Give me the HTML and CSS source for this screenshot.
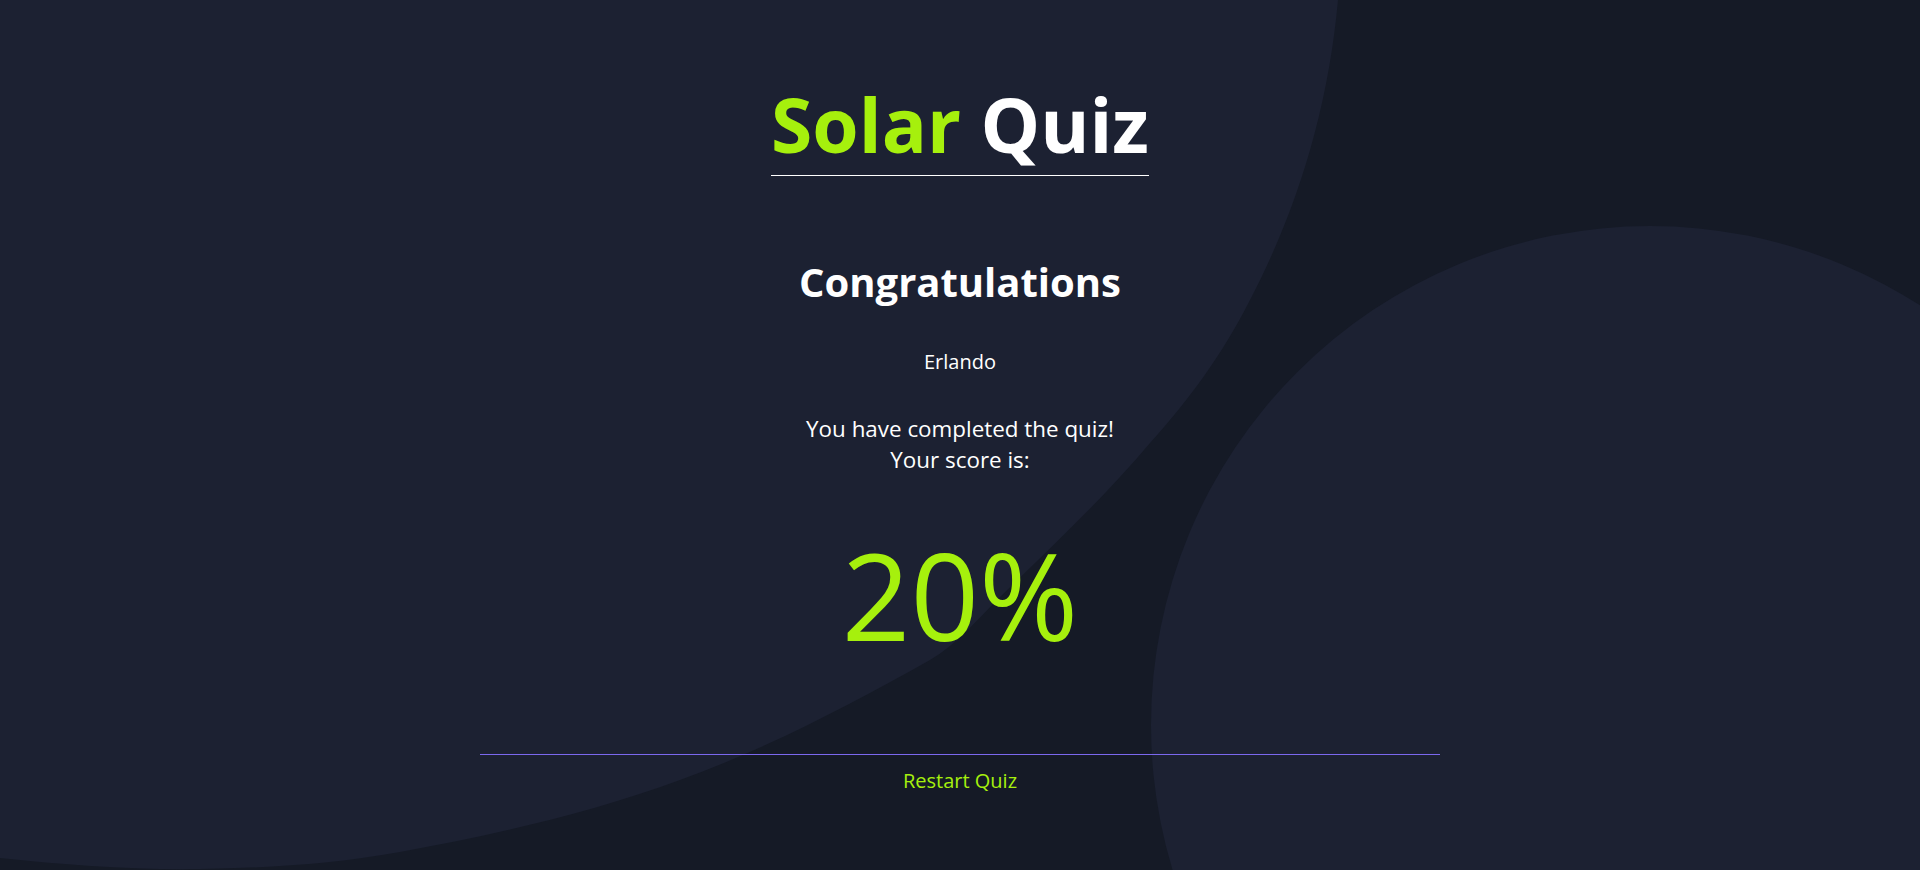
FILE: index.html
```html
<!DOCTYPE html>
<html lang="en">
<head>
<meta charset="utf-8">
<title>Solar Quiz</title>
<link rel="stylesheet" href="styles.css">
</head>
<body>
<svg class="backdrop" viewBox="0 0 1920 870" width="1920" height="870" aria-hidden="true">
  <path class="blob" d="M0,0 H1338 C1328,110 1297,210 1250,300 C1222,355 1189,400 1150,443 C1103,499 1049,549 997,600 C976,621 956,645 930,660 C850,705 766,749 680,780 C590,813 494,835 400,852 C334,864 267,868 200,869 C133,870 66,865 0,858 Z"/>
  <circle class="blob" cx="1650" cy="725" r="499"/>
</svg>
<main class="quiz">
  <h1 class="title"><span class="title-accent">Solar</span> Quiz</h1>
  <section class="result">
    <h2 class="result-heading">Congratulations</h2>
    <p class="player">Erlando</p>
    <p class="message">You have completed the quiz!<br>Your score is:</p>
    <p class="score">20%</p>
  </section>
  <footer class="actions">
    <a class="restart" href="#">Restart Quiz</a>
  </footer>
</main>
</body>
</html>
```
FILE: styles.css
```css
html, body {
  margin: 0;
  padding: 0;
  height: 870px;
  overflow: hidden;
}

body {
  background: #151a26;
  font-family: "Open Sans", "Noto Sans", sans-serif;
  color: #ffffff;
  position: relative;
}

.backdrop {
  position: absolute;
  left: 0;
  top: 0;
  z-index: 0;
  display: block;
}

.blob {
  fill: #1c2132;
}

.quiz {
  position: relative;
  z-index: 1;
  display: flex;
  flex-direction: column;
  align-items: center;
  padding-top: 73px;
}

.title {
  display: inline-block;
  margin: 0;
  font-size: 75px;
  font-weight: 700;
  line-height: normal;
  border-bottom: 1px solid #ffffff;
  color: #ffffff;
}

.title-accent {
  color: #a6f00d;
}

.result {
  display: flex;
  flex-direction: column;
  align-items: center;
  text-align: center;
}

.result-heading {
  margin: 78px 0 0;
  font-size: 40px;
  font-weight: 700;
  line-height: normal;
}

.player {
  margin: 39px 0 0;
  font-size: 20px;
  line-height: normal;
}

.message {
  margin: 38px 0 0;
  font-size: 22.4px;
  line-height: normal;
}

.score {
  margin: 38px 0 0;
  font-size: 120px;
  line-height: normal;
  color: #a6f00d;
}

.actions {
  margin-top: 78px;
  width: 960px;
  border-top: 1px solid #7b68ee;
  padding-top: 12px;
  text-align: center;
}

.restart {
  font-size: 20px;
  line-height: normal;
  color: #a6f00d;
  text-decoration: none;
}
```
